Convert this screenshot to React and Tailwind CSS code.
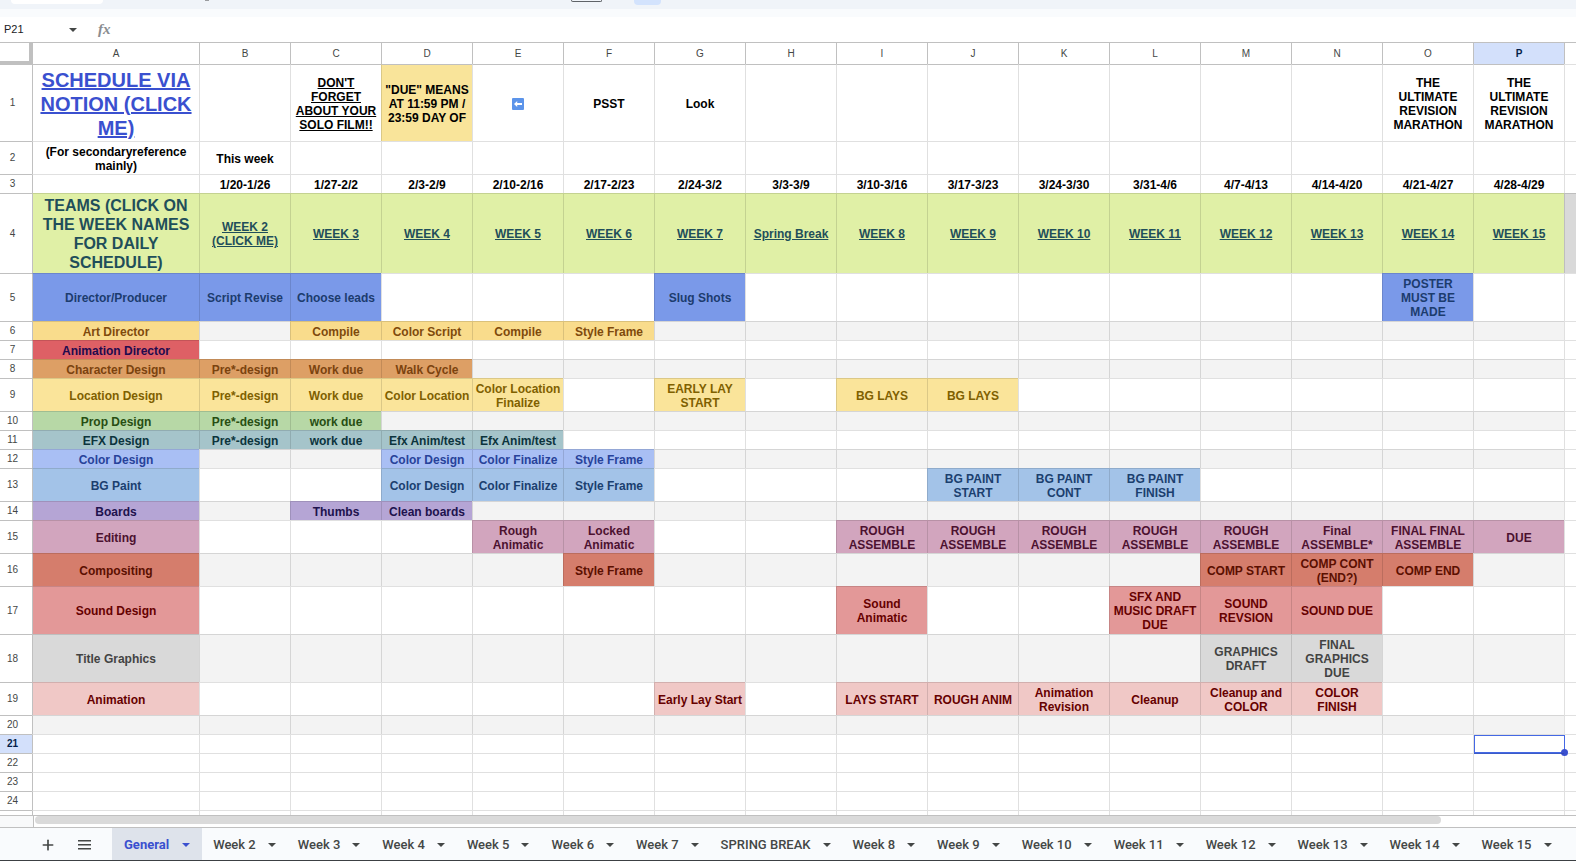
import React from 'react'
import { Plus } from 'lucide-react'

const WEEKS = [2, 3, 4, 5, 6, 7, 8, 9, 10, 11, 12, 13, 14, 15]
const LETTERS = 'ABCDEFGHIJKLMNOP'.split('')

const DATES = {
  B: '1/20-1/26', C: '1/27-2/2', D: '2/3-2/9', E: '2/10-2/16', F: '2/17-2/23',
  G: '2/24-3/2', H: '3/3-3/9', I: '3/10-3/16', J: '3/17-3/23', K: '3/24-3/30',
  L: '3/31-4/6', M: '4/7-4/13', N: '4/14-4/20', O: '4/21-4/27', P: '4/28-4/29',
}

const WEEK_LINKS = {
  B: 'WEEK 2 (CLICK ME)', C: 'WEEK 3', D: 'WEEK 4', E: 'WEEK 5', F: 'WEEK 6',
  G: 'WEEK 7', H: 'Spring Break', I: 'WEEK 8', J: 'WEEK 9', K: 'WEEK 10',
  L: 'WEEK 11', M: 'WEEK 12', N: 'WEEK 13', O: 'WEEK 14', P: 'WEEK 15',
}

const ROWS = [
  {
    n: 1,
    h: 'h-[77px]',
    cells: {
      A: 'SCHEDULE VIA NOTION (CLICK ME)',
      C: "DON'T FORGET ABOUT YOUR SOLO FILM!!",
      D: '"DUE" MEANS AT 11:59 PM / 23:59 DAY OF',
      E: 'arrow',
      F: 'PSST',
      G: 'Look',
      O: 'THE ULTIMATE REVISION MARATHON',
      P: 'THE ULTIMATE REVISION MARATHON',
    },
    links: { A: true, C: true },
    styles: {
      A: 'text-[20px] leading-6 text-[#3a50cf]',
      D: 'bg-[#f9e49a]',
    },
  },
  { n: 2, h: 'h-[33px]', cells: { A: '(For secondaryreference mainly)', B: 'This week' } },
  { n: 3, h: 'h-[19px]', cells: DATES },
  {
    n: 4,
    h: 'h-[80px]',
    color: 'bg-[#e0f0a6] text-[#1f4e5a]',
    cells: { A: 'TEAMS (CLICK ON THE WEEK NAMES FOR DAILY SCHEDULE)', ...WEEK_LINKS },
    links: WEEK_LINKS,
    styles: { A: 'text-[16px] leading-[19px]' },
  },
  {
    n: 5,
    h: 'h-[48px]',
    color: 'bg-[#7a99e9] text-[#1c3c6e]',
    cells: { A: 'Director/Producer', B: 'Script Revise', C: 'Choose leads', G: 'Slug Shots', O: 'POSTER MUST BE MADE' },
  },
  {
    n: 6,
    h: 'h-[19px]',
    color: 'bg-[#f9dc8c] text-[#7f4a0c]',
    cells: { A: 'Art Director', C: 'Compile', D: 'Color Script', E: 'Compile', F: 'Style Frame' },
  },
  { n: 7, h: 'h-[19px]', color: 'bg-[#de6065] text-[#220a4e]', cells: { A: 'Animation Director' } },
  {
    n: 8,
    h: 'h-[19px]',
    color: 'bg-[#dd9f65] text-[#7b430f]',
    cells: { A: 'Character Design', B: 'Pre*-design', C: 'Work due', D: 'Walk Cycle' },
  },
  {
    n: 9,
    h: 'h-[33px]',
    color: 'bg-[#fae49a] text-[#7f6000]',
    cells: {
      A: 'Location Design', B: 'Pre*-design', C: 'Work due', D: 'Color Location',
      E: 'Color Location Finalize', G: 'EARLY LAY START', I: 'BG LAYS', J: 'BG LAYS',
    },
  },
  {
    n: 10,
    h: 'h-[19px]',
    color: 'bg-[#b7d8a6] text-[#274e13]',
    cells: { A: 'Prop Design', B: 'Pre*-design', C: 'work due' },
  },
  {
    n: 11,
    h: 'h-[19px]',
    color: 'bg-[#a5c4ca] text-[#0c343d]',
    cells: { A: 'EFX Design', B: 'Pre*-design', C: 'work due', D: 'Efx Anim/test', E: 'Efx Anim/test' },
  },
  {
    n: 12,
    h: 'h-[19px]',
    color: 'bg-[#a9bff4] text-[#27429a]',
    cells: { A: 'Color Design', D: 'Color Design', E: 'Color Finalize', F: 'Style Frame' },
  },
  {
    n: 13,
    h: 'h-[33px]',
    color: 'bg-[#a3c3e8] text-[#1b3f6f]',
    cells: {
      A: 'BG Paint', D: 'Color Design', E: 'Color Finalize', F: 'Style Frame',
      J: 'BG PAINT START', K: 'BG PAINT CONT', L: 'BG PAINT FINISH',
    },
  },
  {
    n: 14,
    h: 'h-[19px]',
    color: 'bg-[#b5a5d5] text-[#20124d]',
    cells: { A: 'Boards', C: 'Thumbs', D: 'Clean boards' },
  },
  {
    n: 15,
    h: 'h-[33px]',
    color: 'bg-[#d2a5be] text-[#4c1130]',
    cells: {
      A: 'Editing', E: 'Rough Animatic', F: 'Locked Animatic', I: 'ROUGH ASSEMBLE',
      J: 'ROUGH ASSEMBLE', K: 'ROUGH ASSEMBLE', L: 'ROUGH ASSEMBLE', M: 'ROUGH ASSEMBLE',
      N: 'Final ASSEMBLE*', O: 'FINAL FINAL ASSEMBLE', P: 'DUE',
    },
  },
  {
    n: 16,
    h: 'h-[33px]',
    color: 'bg-[#d57d6c] text-[#5b0f00]',
    cells: { A: 'Compositing', F: 'Style Frame', M: 'COMP START', N: 'COMP CONT (END?)', O: 'COMP END' },
  },
  {
    n: 17,
    h: 'h-[48px]',
    color: 'bg-[#e39898] text-[#660000]',
    cells: { A: 'Sound Design', I: 'Sound Animatic', L: 'SFX AND MUSIC DRAFT DUE', M: 'SOUND REVSION', N: 'SOUND DUE' },
  },
  {
    n: 18,
    h: 'h-[48px]',
    color: 'bg-[#d9d9d9] text-[#434343]',
    cells: { A: 'Title Graphics', M: 'GRAPHICS DRAFT', N: 'FINAL GRAPHICS DUE' },
  },
  {
    n: 19,
    h: 'h-[33px]',
    color: 'bg-[#f0c8c6] text-[#660000]',
    cells: {
      A: 'Animation', G: 'Early Lay Start', I: 'LAYS START', J: 'ROUGH ANIM',
      K: 'Animation Revision', L: 'Cleanup', M: 'Cleanup and COLOR', N: 'COLOR\nFINISH',
    },
  },
  ...[20, 21, 22, 23, 24].map((n) => ({ n, h: 'h-[19px]', cells: {} })),
]

const SHEETS = WEEKS.flatMap((w) => (w === 8 ? ['SPRING BREAK', 'Week 8'] : [`Week ${w}`]))

const Caret = () => (
  <svg width="8" height="4" viewBox="0 0 8 4" fill="currentColor" aria-hidden="true">
    <path d="M0 0h8L4 4z" />
  </svg>
)

const Lines = () => (
  <svg width="13" height="11" viewBox="0 0 13 11" fill="currentColor" aria-hidden="true">
    <path d="M0 1h13v1.4H0zM0 5h13v1.4H0zM0 9h13v1.4H0z" />
  </svg>
)

const ArrowEmoji = () => (
  <svg className="mx-auto block" width="12" height="12" viewBox="0 0 12 12" role="img" aria-label="Left arrow">
    <rect width="12" height="12" rx="1" fill="#5c94ea" />
    <path d="M2 6l3.2-3v2.1H10v1.8H5.2V9z" fill="#fff" />
  </svg>
)

const Toolbar = () => (
  <div className="h-[17px] shrink-0 bg-[#f9fbfd]">
    <div className="flex h-[9px] items-start bg-[#f0f4f9]">
      <div className="ml-[11px] h-1 w-[92px] rounded-b-full bg-white" />
      <div className="ml-[102px] h-px w-1 bg-[#9a9c9f]" />
      <div className="ml-[362px] h-[2px] w-[31px] rounded-b-sm border border-t-0 border-[#5f6368]" />
      <div className="ml-[32px] h-[5px] w-[27px] rounded-b bg-[#d3e3fd]" />
    </div>
  </div>
)

const FormulaBar = () => (
  <div className="flex h-[25px] shrink-0 items-center bg-white">
    <input
      aria-label="Name box"
      defaultValue="P21"
      className="ml-[4px] w-[65px] bg-transparent text-[11px] text-[#202124] outline-none"
    />
    <button aria-label="Named ranges" className="text-[#444746]">
      <Caret />
    </button>
    <span className="ml-[21px] font-['Liberation_Serif',serif] text-[15px] font-bold text-[#8a8d91] italic">fx</span>
    <input aria-label="Formula" className="ml-3 flex-1 bg-transparent text-[11px] outline-none" />
  </div>
)

const Cell = ({ row, col }) => {
  const text = row.cells[col]
  const own = row.styles?.[col] ?? ''
  const banded = row.n >= 6 && row.n <= 20 && row.n % 2 === 0
  const fill = text && row.color ? row.color : banded ? 'bg-[#f3f3f3]' : ''
  const left = col === 'A' ? 'border-l-[#c0c0c0]' : 'border-l-black/12'
  const top = row.n === 1 ? 'border-t-[#c0c0c0]' : 'border-t-black/12'
  const selected = row.n === 21 && col === 'P'

  return (
    <td
      className={`relative border-t border-l px-[2px] pt-px pb-0 text-center align-middle whitespace-pre-line ${left} ${top} ${fill} ${own}`}
    >
      {text === 'arrow' ? (
        <ArrowEmoji />
      ) : row.links?.[col] ? (
        <a href="#" className="underline">{text}</a>
      ) : (
        text
      )}
      {selected && (
        <div className="absolute inset-0 -right-px -bottom-px border border-b-2 border-[#4468e4]">
          <span className="absolute -right-1 -bottom-1 size-[7px] rounded-full bg-[#3a50cf]" />
        </div>
      )}
    </td>
  )
}

const Grid = () => (
  <div className="min-h-0 flex-1 overflow-hidden">
    <table className="w-full table-fixed border-separate border-spacing-0 text-[12px] leading-[14px] font-bold text-black">
      <colgroup>
        <col className="w-[32px]" />
        <col className="w-[167px]" />
        {LETTERS.slice(1).map((l) => (
          <col key={l} className="w-[91px]" />
        ))}
        <col />
      </colgroup>
      <thead>
        <tr className="h-[22px] text-[10px] font-normal text-[#444746]">
          <th className="border-t border-r-3 border-b-3 border-[#c0c0c0] p-0" aria-label="Select all" />
          {LETTERS.map((l) => (
            <th
              key={l}
              scope="col"
              className={`border-t border-l border-[#c0c0c0] p-0 ${l === 'P' ? 'bg-[#d3e0fb] font-bold text-[#041e49]' : 'font-normal'}`}
            >
              {l}
            </th>
          ))}
          <th className="border-t border-l border-[#c0c0c0] p-0" />
        </tr>
      </thead>
      <tbody>
        {ROWS.map((row) => (
          <tr key={row.n} className={row.h}>
            <th
              scope="row"
              className={`border-t border-[#c0c0c0] py-0 pr-[7px] pl-0 text-center text-[10px] ${row.n === 21 ? 'bg-[#d3e0fb] font-bold text-[#041e49]' : 'font-normal text-[#444746]'}`}
            >
              {row.n}
            </th>
            {LETTERS.map((l) => (
              <Cell key={l} row={row} col={l} />
            ))}
            <td
              className={`border-t border-l border-t-black/12 border-l-black/12 p-0 ${row.n === 4 ? 'bg-[#d9d9d9]' : ''}`}
            />
          </tr>
        ))}
        <tr className="h-[19px]">
          <th className="border-t border-[#c0c0c0] p-0" />
          {LETTERS.map((l) => (
            <td key={l} className={`border-t border-l border-t-black/12 p-0 ${l === 'A' ? 'border-l-[#c0c0c0]' : 'border-l-black/12'}`} />
          ))}
          <td className="border-t border-l border-black/12 p-0" />
        </tr>
      </tbody>
    </table>
  </div>
)

const Scrollbar = () => (
  <div className="flex h-[12px] shrink-0 border-t border-[#c0c0c0] bg-white">
    <div className="w-[34px] border-r border-[#c0c0c0] bg-[#f8f9fa]" />
    <div className="mr-[135px] ml-px h-2 flex-1 rounded-full bg-[#dadada]" />
  </div>
)

const SheetTabs = () => (
  <nav className="flex h-[34px] shrink-0 items-stretch overflow-hidden border-t border-b border-t-[#c0c0c0] border-b-[#3c4043] bg-[#f9fbfd] font-[Roboto,sans-serif] text-[13px] text-[#444746]">
    <button aria-label="Add sheet" className="ml-[38px] flex w-5 items-center justify-center pt-px">
      <Plus size={16} strokeWidth={2.5} />
    </button>
    <button aria-label="All sheets" className="ml-4 flex w-5 items-center justify-center pt-px">
      <Lines />
    </button>
    <button className="ml-[18px] flex shrink-0 items-center gap-[13px] bg-[#dee3eb] px-[12px] pt-px font-bold text-[#3a50cf]">
      General
      <Caret />
    </button>
    {SHEETS.map((name) => (
      <button key={name} className="flex shrink-0 items-center gap-[12px] px-[11px] pt-px font-medium whitespace-nowrap">
        {name}
        <Caret />
      </button>
    ))}
  </nav>
)

const App = () => (
  <div className="flex h-screen flex-col overflow-hidden bg-white font-['Liberation_Sans',sans-serif]">
    <Toolbar />
    <FormulaBar />
    <Grid />
    <Scrollbar />
    <SheetTabs />
  </div>
)

export default App
